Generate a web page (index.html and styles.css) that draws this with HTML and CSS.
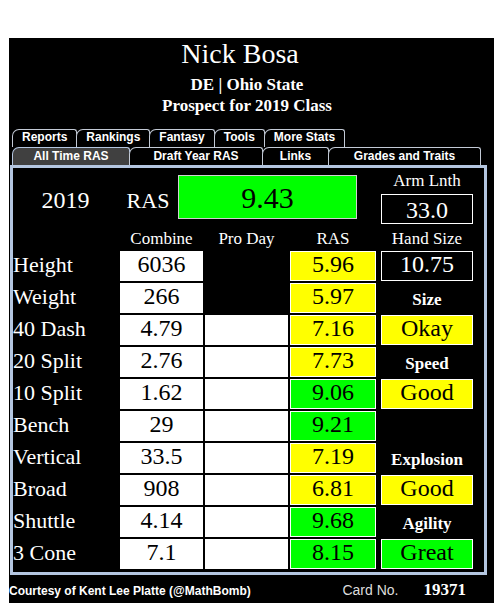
FILE: index.html
```html
<!DOCTYPE html>
<html lang="en">
<head>
  <meta charset="UTF-8" />
  <meta name="viewport" content="width=device-width, initial-scale=1.0" />
  <title>Nick Bosa - RAS Card</title>
  <link rel="stylesheet" href="styles.css">
</head>
<body>

  <div class="card">

    <!-- HEADER -->
    <h1 class="name">Nick Bosa</h1>
    <p class="sub">DE | Ohio State</p>
    <p class="sub">Prospect for 2019 Class</p>

    <!-- TABS -->
    <div class="tabs tabs-top">
      <a href="#" class="tab">Reports</a>
      <a href="#" class="tab">Rankings</a>
      <a href="#" class="tab">Fantasy</a>
      <a href="#" class="tab">Tools</a>
      <a href="#" class="tab">More Stats</a>
    </div>
    <div class="tabs tabs-bottom">
      <a href="#" class="tab tab-alltime active">All Time RAS</a>
      <a href="#" class="tab tab-draft">Draft Year RAS</a>
      <a href="#" class="tab tab-links">Links</a>
      <a href="#" class="tab tab-grades">Grades and Traits</a>
    </div>

    <!-- RAS PANEL -->
    <div class="panel">
      <div class="stats">
        <div class="top-main">
          <span class="year">2019</span>
          <span class="ras-label">RAS</span>
          <span class="total">9.43</span>
        </div>
        <div class="arm">
          <span class="arm-label">Arm Lnth</span>
          <span class="box box-arm dark">33.0</span>
        </div>

        <div></div>
        <div class="head">Combine</div>
        <div class="head">Pro Day</div>
        <div class="head">RAS</div>
        <div class="head head-right">Hand Size</div>

        <div class="lbl">Height</div>
        <div class="val">6036</div>
        <div></div>
        <div class="ras yellow">5.96</div>
        <div class="box dark">10.75</div>

        <div class="lbl">Weight</div>
        <div class="val">266</div>
        <div></div>
        <div class="ras yellow">5.97</div>
        <div class="trait">Size</div>

        <div class="lbl">40 Dash</div>
        <div class="val">4.79</div>
        <div class="val"></div>
        <div class="ras yellow">7.16</div>
        <div class="box yellow">Okay</div>

        <div class="lbl">20 Split</div>
        <div class="val">2.76</div>
        <div class="val"></div>
        <div class="ras yellow">7.73</div>
        <div class="trait">Speed</div>

        <div class="lbl">10 Split</div>
        <div class="val">1.62</div>
        <div class="val"></div>
        <div class="ras green">9.06</div>
        <div class="box yellow">Good</div>

        <div class="lbl">Bench</div>
        <div class="val">29</div>
        <div class="val"></div>
        <div class="ras green">9.21</div>
        <div></div>

        <div class="lbl">Vertical</div>
        <div class="val">33.5</div>
        <div class="val"></div>
        <div class="ras yellow">7.19</div>
        <div class="trait">Explosion</div>

        <div class="lbl">Broad</div>
        <div class="val">908</div>
        <div class="val"></div>
        <div class="ras yellow">6.81</div>
        <div class="box yellow">Good</div>

        <div class="lbl">Shuttle</div>
        <div class="val">4.14</div>
        <div class="val"></div>
        <div class="ras green">9.68</div>
        <div class="trait">Agility</div>

        <div class="lbl">3 Cone</div>
        <div class="val">7.1</div>
        <div class="val"></div>
        <div class="ras green">8.15</div>
        <div class="box green">Great</div>
      </div>
    </div>

    <!-- FOOTER -->
    <div class="foot">
      <span class="credit">Courtesy of Kent Lee Platte (@MathBomb)</span>
      <span class="card-no">Card No.</span>
      <span class="card-num">19371</span>
    </div>

  </div>

</body>
</html>
```

FILE: styles.css
```css
/* RESET */
*, *::before, *::after {
  box-sizing: border-box;
  margin: 0;
  padding: 0;
}

body {
  background-color: #fff;
  font-family: 'Liberation Serif', 'Times New Roman', serif;
}

a {
  text-decoration: none;
  color: inherit;
}

/* CARD */
.card {
  width: 485px;
  margin: 38px 0 0 9px;
  background-color: #000;
  color: #fff;
}

.name {
  font-size: 28px;
  font-weight: normal;
  line-height: 32px;
  text-align: center;
  padding-right: 23px;
  margin-bottom: 4px;
}

.sub {
  font-size: 17px;
  font-weight: bold;
  line-height: 21px;
  text-align: center;
  padding-right: 9px;
}

/* TABS */
.tabs {
  display: flex;
  margin-left: 3px;
  font-family: 'Liberation Sans', Arial, sans-serif;
  font-size: 12px;
  font-weight: bold;
}

.tabs-top {
  margin-top: 13px;
}

.tab {
  display: block;
  text-align: center;
  white-space: nowrap;
  background-color: #000;
  color: #fff;
  border: 1px solid #c3cad6;
  border-bottom: none;
  border-radius: 7px 3px 0 0 / 7px 3px 0 0;
}

.tab + .tab {
  margin-left: -1px;
}

.tabs-top .tab {
  height: 18px;
  line-height: 14px;
  padding: 0 9px;
}

.tabs-bottom .tab {
  height: 18px;
  line-height: 16px;
}

.tab-alltime { width: 118px; }
.tab-draft { width: 134px; }
.tab-links { width: 67px; }
.tab-grades { width: 153px; }

.tab.active {
  background-color: #404040;
  border-color: #b4c6e0;
}

/* PANEL */
.panel {
  margin-left: 1px;
  width: 477px;
  height: 410px;
  border: 3px solid #b4c6e0;
  padding-bottom: 3px;
}

.stats {
  display: grid;
  grid-template-columns: 105px 83px 83px 86px 95px;
  grid-template-rows: 58px 21px repeat(10, 30px);
  gap: 2px;
}

.top-main {
  grid-column: 1 / 5;
  display: flex;
  align-items: baseline;
  padding-top: 7px;
}

.year {
  width: 105px;
  text-align: center;
  font-size: 24px;
}

.ras-label {
  width: 60px;
  text-align: center;
  font-size: 22px;
}

.total {
  width: 179px;
  height: 44px;
  padding-top: 2px;
  border: 1px solid #d0d0d0;
  background-color: #00ff00;
  color: #000;
  font-size: 30px;
  line-height: 40px;
  text-align: center;
}

.arm {
  justify-self: end;
  width: 92px;
  display: flex;
  flex-direction: column;
  text-align: center;
}

.arm-label {
  font-size: 17px;
  line-height: 26px;
}

.head {
  font-size: 17px;
  line-height: 21px;
  text-align: center;
  white-space: nowrap;
}

.head-right {
  justify-self: end;
  width: 92px;
}

.lbl {
  font-size: 22px;
  line-height: 27px;
  white-space: nowrap;
}

.val {
  background-color: #fff;
  color: #000;
  font-size: 24px;
  line-height: 27px;
  text-align: center;
}

.ras, .box {
  border: 1px solid #fff;
  color: #000;
  font-size: 24px;
  line-height: 25px;
  text-align: center;
}

.box {
  justify-self: end;
  width: 92px;
}

.box-arm {
  height: 30px;
  line-height: 30px;
}

.dark {
  background-color: #000;
  color: #fff;
}

.yellow {
  background-color: #ffff00;
}

.green {
  background-color: #00ff00;
}

.trait {
  justify-self: end;
  width: 92px;
  padding-top: 3px;
  font-size: 17px;
  font-weight: bold;
  line-height: 28px;
  text-align: center;
}

/* FOOTER */
.foot {
  display: flex;
  align-items: baseline;
  height: 28px;
  padding-top: 5px;
}

.credit {
  font-family: 'Liberation Sans', Arial, sans-serif;
  font-size: 12px;
  font-weight: bold;
}

.card-no {
  margin-left: auto;
  font-family: 'Liberation Sans', Arial, sans-serif;
  font-size: 14px;
  color: #ddd;
}

.card-num {
  margin: 0 28px 0 25px;
  font-size: 17px;
  font-weight: bold;
  line-height: 20px;
}
```
